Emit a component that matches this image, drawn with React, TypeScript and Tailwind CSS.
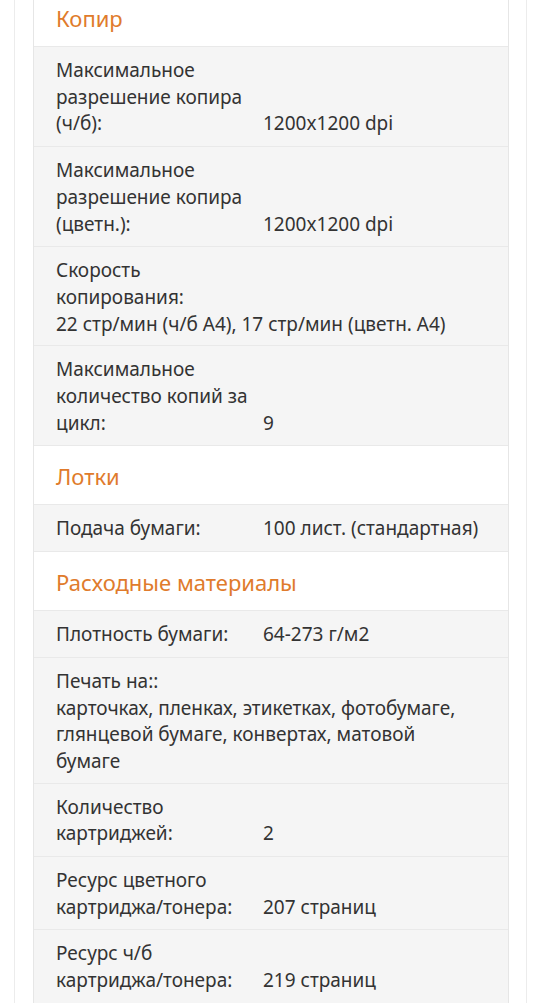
type Row = { label: string; value: string; wide?: boolean }
type Section = { title: string; rows: Row[] }

const sections: Section[] = [
  {
    title: 'Копир',
    rows: [
      { label: 'Максимальное разрешение копира (ч/б):', value: '1200x1200 dpi' },
      { label: 'Максимальное разрешение копира (цветн.):', value: '1200x1200 dpi' },
      { label: 'Скорость копирования:', value: '22 стр/мин (ч/б A4), 17 стр/мин (цветн. A4)', wide: true },
      { label: 'Максимальное количество копий за цикл:', value: '9' }
    ]
  },
  {
    title: 'Лотки',
    rows: [{ label: 'Подача бумаги:', value: '100 лист. (стандартная)' }]
  },
  {
    title: 'Расходные материалы',
    rows: [
      { label: 'Плотность бумаги:', value: '64-273 г/м2' },
      {
        label: 'Печать на::',
        value: 'карточках, пленках, этикетках, фотобумаге, глянцевой бумаге, конвертах, матовой бумаге',
        wide: true
      },
      { label: 'Количество картриджей:', value: '2' },
      { label: 'Ресурс цветного картриджа/тонера:', value: '207 страниц' },
      { label: 'Ресурс ч/б картриджа/тонера:', value: '219 страниц' }
    ]
  }
]

function SpecRow({ row }: { row: Row }) {
  if (row.wide) {
    return (
      <div className="border-t border-[#e9e9e9] bg-[#f5f5f5] pl-[22px] pr-[30px] pt-[10px] pb-[8px]">
        <div className="w-[200px]">{row.label}</div>
        <div>{row.value}</div>
      </div>
    )
  }
  return (
    <div className="flex items-end border-t border-[#e9e9e9] bg-[#f5f5f5] pl-[22px] pr-4 pt-[10px] pb-[9px]">
      <div className="w-[200px] shrink-0">{row.label}</div>
      <div className="ml-[7px]">{row.value}</div>
    </div>
  )
}

export default function App() {
  return (
    <div
      className="min-h-screen overflow-hidden bg-white text-[19px] leading-[26.7px] text-[#333]"
      style={{ fontFamily: '"Noto Sans", "Open Sans", sans-serif' }}
    >
      <div className="ml-[14px] mr-[13px] min-h-screen border-x border-[#ececec] pl-[18px] pr-[17px]">
        <div className="-mt-[13px] border-x border-[#e6e6e6]">
          {sections.map((s) => (
            <div key={s.title}>
              <div className="border-t border-[#e9e9e9] bg-white pl-[22px] pt-[17px] pb-[14px] text-[22px] leading-[27px] text-[#e07b2c]">
                {s.title}
              </div>
              {s.rows.map((r) => (
                <SpecRow key={r.label} row={r} />
              ))}
            </div>
          ))}
        </div>
      </div>
    </div>
  )
}
